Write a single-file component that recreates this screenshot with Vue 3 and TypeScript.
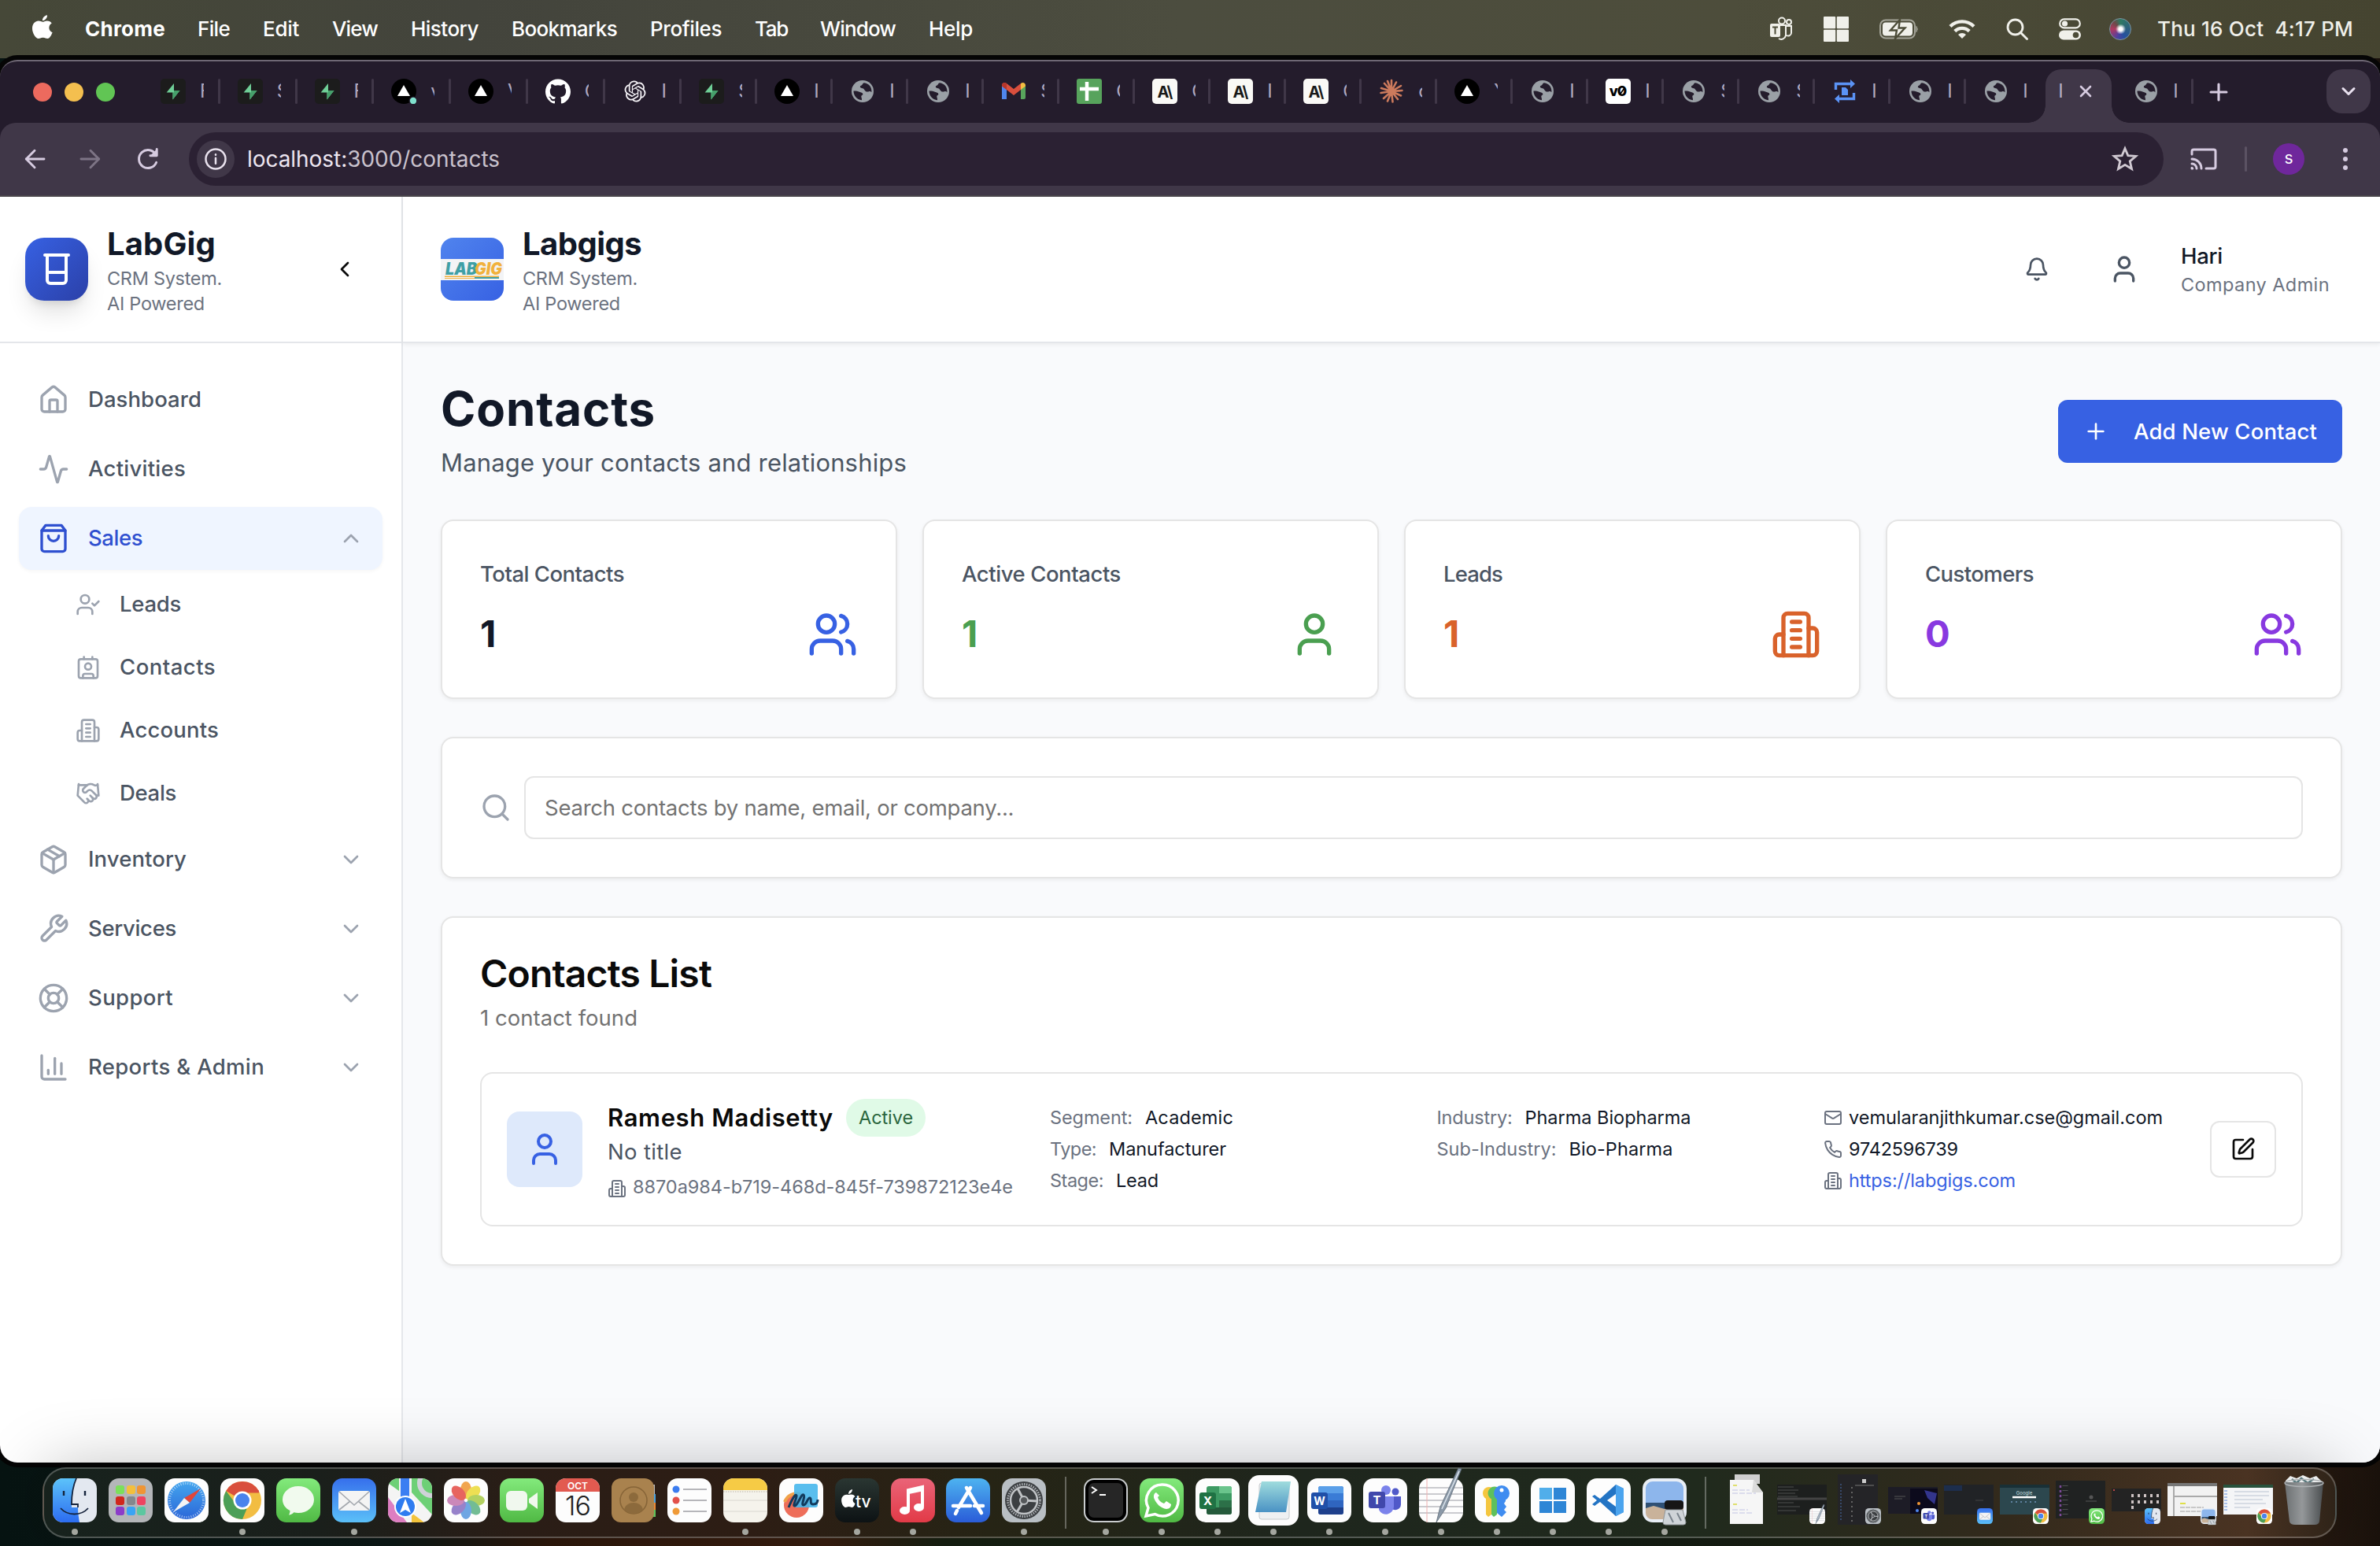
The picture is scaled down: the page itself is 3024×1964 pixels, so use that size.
<script setup lang="ts">
import { h, ref } from 'vue'

// Stroke icons on a 24-unit grid
const ICONS: Record<string, string> = {
  home: '<path d="M15 21v-8a1 1 0 0 0-1-1h-4a1 1 0 0 0-1 1v8"/><path d="M3 10a2 2 0 0 1 .709-1.528l7-5.999a2 2 0 0 1 2.582 0l7 5.999A2 2 0 0 1 21 10v9a2 2 0 0 1-2 2H5a2 2 0 0 1-2-2z"/>',
  activity: '<path d="M22 12h-2.48a2 2 0 0 0-1.93 1.46l-2.35 8.36a.25.25 0 0 1-.48 0L9.24 2.18a.25.25 0 0 0-.48 0l-2.35 8.36A2 2 0 0 1 4.49 12H2"/>',
  bag: '<path d="M6 2 3 6v14a2 2 0 0 0 2 2h14a2 2 0 0 0 2-2V6l-3-4Z"/><path d="M3 6h18"/><path d="M16 10a4 4 0 0 1-8 0"/>',
  userCheck: '<path d="m16 11 2 2 4-4"/><path d="M16 21v-2a4 4 0 0 0-4-4H6a4 4 0 0 0-4 4v2"/><circle cx="9" cy="7" r="4"/>',
  contact: '<path d="M16 2v2"/><path d="M7 22v-2a2 2 0 0 1 2-2h6a2 2 0 0 1 2 2v2"/><path d="M8 2v2"/><circle cx="12" cy="11" r="3"/><rect x="3" y="4" width="18" height="18" rx="2"/>',
  building: '<path d="M6 22V4a2 2 0 0 1 2-2h8a2 2 0 0 1 2 2v18Z"/><path d="M6 12H4a2 2 0 0 0-2 2v6a2 2 0 0 0 2 2h2"/><path d="M18 9h2a2 2 0 0 1 2 2v9a2 2 0 0 1-2 2h-2"/><path d="M10 6h4"/><path d="M10 10h4"/><path d="M10 14h4"/><path d="M10 18h4"/>',
  handshake: '<path d="m11 17 2 2a1 1 0 1 0 3-3"/><path d="m14 14 2.5 2.5a1 1 0 1 0 3-3l-3.88-3.88a3 3 0 0 0-4.24 0l-.88.88a1 1 0 1 1-3-3l2.81-2.81a5.79 5.79 0 0 1 7.06-.87l.47.28a2 2 0 0 0 1.42.25L21 4"/><path d="m21 3 1 11h-2"/><path d="M3 3 2 14l6.5 6.5a1 1 0 1 0 3-3"/><path d="M3 4h8"/>',
  box: '<path d="m7.5 4.27 9 5.15"/><path d="M21 8a2 2 0 0 0-1-1.73l-7-4a2 2 0 0 0-2 0l-7 4A2 2 0 0 0 3 8v8a2 2 0 0 0 1 1.73l7 4a2 2 0 0 0 2 0l7-4A2 2 0 0 0 21 16Z"/><path d="m3.3 7 8.7 5 8.7-5"/><path d="M12 22V12"/>',
  wrench: '<path d="M14.7 6.3a1 1 0 0 0 0 1.4l1.6 1.6a1 1 0 0 0 1.4 0l3.77-3.77a6 6 0 0 1-7.94 7.94l-6.91 6.91a2.12 2.12 0 0 1-3-3l6.91-6.91a6 6 0 0 1 7.94-7.94l-3.76 3.76z"/>',
  buoy: '<circle cx="12" cy="12" r="10"/><path d="m4.93 4.93 4.24 4.24"/><path d="m14.83 9.17 4.24-4.24"/><path d="m14.83 14.83 4.24 4.24"/><path d="m9.17 14.83-4.24 4.24"/><circle cx="12" cy="12" r="4"/>',
  chart: '<path d="M3 3v16a2 2 0 0 0 2 2h16"/><path d="M18 17V9"/><path d="M13 17V5"/><path d="M8 17v-3"/>',
  beaker: '<path d="M4.5 3h15"/><path d="M6 3v16a2 2 0 0 0 2 2h8a2 2 0 0 0 2-2V3"/><path d="M6 14h12"/>',
  bell: '<path d="M10.268 21a2 2 0 0 0 3.464 0"/><path d="M3.262 15.326A1 1 0 0 0 4 17h16a1 1 0 0 0 .74-1.673C19.41 13.956 18 12.499 18 8A6 6 0 0 0 6 8c0 4.499-1.411 5.956-2.738 7.326"/>',
  user: '<path d="M19 21v-2a4 4 0 0 0-4-4H9a4 4 0 0 0-4 4v2"/><circle cx="12" cy="7" r="4"/>',
  users: '<path d="M16 21v-2a4 4 0 0 0-4-4H6a4 4 0 0 0-4 4v2"/><circle cx="9" cy="7" r="4"/><path d="M22 21v-2a4 4 0 0 0-3-3.87"/><path d="M16 3.13a4 4 0 0 1 0 7.75"/>',
  mail: '<rect x="2" y="4" width="20" height="16" rx="2"/><path d="m22 7-8.97 5.7a1.94 1.94 0 0 1-2.06 0L2 7"/>',
  phone: '<path d="M22 16.92v3a2 2 0 0 1-2.18 2 19.79 19.79 0 0 1-8.63-3.07 19.5 19.5 0 0 1-6-6 19.79 19.79 0 0 1-3.07-8.67A2 2 0 0 1 4.11 2h3a2 2 0 0 1 2 1.72 12.84 12.84 0 0 0 .7 2.81 2 2 0 0 1-.45 2.11L8.09 9.91a16 16 0 0 0 6 6l1.27-1.27a2 2 0 0 1 2.11-.45 12.84 12.84 0 0 0 2.81.7A2 2 0 0 1 22 16.92z"/>',
  edit: '<path d="M12 3H5a2 2 0 0 0-2 2v14a2 2 0 0 0 2 2h14a2 2 0 0 0 2-2v-7"/><path d="M18.375 2.625a1 1 0 0 1 3 3l-9.013 9.014a2 2 0 0 1-.853.505l-2.873.84a.5.5 0 0 1-.62-.62l.84-2.873a2 2 0 0 1 .506-.852z"/>',
  plus: '<path d="M5 12h14"/><path d="M12 5v14"/>',
  search: '<circle cx="11" cy="11" r="8"/><path d="m21 21-4.3-4.3"/>',
  up: '<path d="m18 15-6-6-6 6"/>',
  down: '<path d="m6 9 6 6 6-6"/>',
  left: '<path d="m15 18-6-6 6-6"/>',
  close: '<path d="M18 6 6 18"/><path d="m6 6 12 12"/>',
  arrowLeft: '<path d="M21 12H4"/><path d="m12 4-8 8 8 8"/>',
  arrowRight: '<path d="M3 12h17"/><path d="m12 4 8 8-8 8"/>',
  reload: '<path d="M20 15.2A8.6 8.6 0 1 1 19.6 8"/><path d="M20.4 2.6v6.2h-6.2"/><path d="M16 8.4h4V4.6z" fill="currentColor"/>',
  info: '<circle cx="12" cy="12" r="10"/><path d="M12 11v5.5"/><path d="M12 7.4v.4"/>',
  star: '<path d="m12 2.6 2.7 6.3 6.9.6-5.2 4.5 1.6 6.8-6-3.6-6 3.6L7.6 14 2.4 9.5l6.9-.6z" stroke-linejoin="miter"/>',
  cast: '<path d="M2 8V5.500a1.500 1.500 0 0 1 1.500-1.500h17A1.500 1.500 0 0 1 22 5.500v13a1.500 1.500 0 0 1-1.500 1.500H14"/><path d="M2 12a8 8 0 0 1 8 8"/><path d="M2 16a4 4 0 0 1 4 4"/><path d="M2 19.500v.5h.5"/>',
}

const Icon = (props: { name: string; size: number; weight?: number }) =>
  h('svg', {
    width: props.size,
    height: props.size,
    viewBox: '0 0 24 24',
    fill: 'none',
    stroke: 'currentColor',
    'stroke-width': props.weight ?? 2,
    'stroke-linecap': 'round',
    'stroke-linejoin': 'round',
    innerHTML: ICONS[props.name],
  })
Icon.props = ['name', 'size', 'weight']

// Tab favicons, 32-unit grid
const FAVICONS: Record<string, string> = {
  supabase: '<rect width="32" height="32" rx="5" fill="#1c1c1c"/><path d="M17 6v9h7.500L15.500 26.500V17.500H7.600z" fill="#6fcf97"/><path d="M15.500 17.500h1.500V15h7.500L15.500 26.500z" fill="#46a06b"/>',
  vercel: '<circle cx="16" cy="16" r="16" fill="#000"/><path d="M16 8l8 14H8z" fill="#fff"/>',
  vercelDot: '<circle cx="16" cy="16" r="16" fill="#000"/><path d="M16 8l8 14H8z" fill="#fff"/><circle cx="28" cy="28" r="5.500" fill="#241c2c"/><circle cx="28" cy="28" r="4.200" fill="#7fe0cd"/>',
  github: '<path transform="scale(1.3333)" fill="#fff" d="M12 .297c-6.630 0-12 5.373-12 12 0 5.303 3.438 9.800 8.205 11.385.6.113.82-.258.82-.577 0-.285-.01-1.040-.015-2.040-3.338.724-4.042-1.610-4.042-1.610C4.422 18.070 3.633 17.700 3.633 17.700c-1.087-.744.084-.729.084-.729 1.205.084 1.838 1.236 1.838 1.236 1.070 1.835 2.809 1.305 3.495.998.108-.776.417-1.305.76-1.605-2.665-.3-5.466-1.332-5.466-5.930 0-1.310.465-2.380 1.235-3.220-.135-.303-.54-1.523.105-3.176 0 0 1.005-.322 3.300 1.230.96-.267 1.980-.399 3-.405 1.020.006 2.040.138 3 .405 2.280-1.552 3.285-1.230 3.285-1.230.645 1.653.24 2.873.12 3.176.765.84 1.230 1.910 1.230 3.220 0 4.610-2.805 5.625-5.475 5.920.42.36.81 1.096.81 2.220 0 1.606-.015 2.896-.015 3.286 0 .315.21.69.825.57C20.565 22.092 24 17.592 24 12.297c0-6.627-5.373-12-12-12"/>',
  openai: '<path transform="translate(2.500 2.500) scale(1.125)" fill="#f4f2f6" d="M22.2819 9.8211a5.9847 5.9847 0 0 0-.5157-4.9108 6.0462 6.0462 0 0 0-6.5098-2.9A6.0651 6.0651 0 0 0 4.9807 4.1818a5.9847 5.9847 0 0 0-3.9977 2.9 6.0462 6.0462 0 0 0 .7427 7.0966 5.98 5.98 0 0 0 .511 4.9107 6.051 6.051 0 0 0 6.5146 2.9001A5.9847 5.9847 0 0 0 13.2599 24a6.0557 6.0557 0 0 0 5.7718-4.2058 5.9894 5.9894 0 0 0 3.9977-2.9001 6.0557 6.0557 0 0 0-.7475-7.0729zm-9.022 12.6081a4.4755 4.4755 0 0 1-2.8764-1.0408l.1419-.0804 4.7783-2.7582a.7948.7948 0 0 0 .3927-.6813v-6.7369l2.02 1.1686a.071.071 0 0 1 .038.052v5.5826a4.504 4.504 0 0 1-4.4945 4.4944zm-9.6607-4.1254a4.4708 4.4708 0 0 1-.5346-3.0137l.142.0852 4.783 2.7582a.7712.7712 0 0 0 .7806 0l5.8428-3.3685v2.3324a.0804.0804 0 0 1-.0332.0615L9.74 19.9502a4.4992 4.4992 0 0 1-6.1408-1.6464zM2.3408 7.8956a4.485 4.485 0 0 1 2.3655-1.9728V11.6a.7664.7664 0 0 0 .3879.6765l5.8144 3.3543-2.0201 1.1685a.0757.0757 0 0 1-.071 0l-4.8303-2.7865A4.504 4.504 0 0 1 2.3408 7.872zm16.5963 3.8558L13.1038 8.364 15.1192 7.2a.0757.0757 0 0 1 .071 0l4.8303 2.7913a4.4944 4.4944 0 0 1-.6765 8.1042v-5.6772a.79.79 0 0 0-.407-.667zm2.0107-3.0231l-.142-.0852-4.7735-2.7818a.7759.7759 0 0 0-.7854 0L9.409 9.2297V6.8974a.0662.0662 0 0 1 .0284-.0615l4.8303-2.7866a4.4992 4.4992 0 0 1 6.6802 4.66zM8.3065 12.863l-2.02-1.1638a.0804.0804 0 0 1-.038-.0567V6.0742a4.4992 4.4992 0 0 1 7.3757-3.4537l-.142.0805L8.704 5.459a.7948.7948 0 0 0-.3927.6813zm1.0976-2.3654l2.602-1.4998 2.6069 1.4998v2.9994l-2.5974 1.4997-2.6067-1.4997Z"/>',
  globe: '<circle cx="16" cy="16" r="14" fill="#9aa0a6"/><path d="M4.500 15.500c4 0 5.500.3 7.500 1.200 2 1 4 .6 4.300 2.600.3 1.800-2 1.700-2 3.300 0 1.500.9 2.200.7 4.600C8.500 26.800 4.400 21 4.500 15.500z" fill="#241c2c"/><path d="M18 5.200c-2.500.8-2 2.800-3.500 3.200-1.800.6-2.300 2.200-.8 3.200 1.700 1 3.500.5 4.500 2.300 1.200 2 3 3.200 5.200 2.500 2-.6 3-.2 4 .8C28 11 24.500 6.200 18 5.200z" fill="#241c2c"/>',
  gmail: '<path d="M1 8v18h6V13z" fill="#4f86ec"/><path d="M25 13v13h4a2 2 0 0 0 2-2V8z" fill="#58a55c"/><path d="M1 8.500C1 5 4.500 4 7 6l9 7 9-7v8l-9 7-9-7-6-4.500z" fill="#d94f3d"/><path d="M1 8.500C1 5 4.500 4 7 6v8l-6-4.500z" fill="#b5362b"/><path d="M25 6c2.500-2 6-1 6 2.500v1L25 14z" fill="#f2bd42"/>',
  sheets: '<rect width="32" height="32" rx="3" fill="#57a35c"/><path d="M13 4v24M4 13h24" stroke="#fff" stroke-width="4.500"/>',
  anthropic: '<rect width="32" height="32" rx="5" fill="#faf9f6"/><text x="15.800" y="23.500" font-family="Inter, sans-serif" font-weight="700" font-size="20" letter-spacing="-1.200" text-anchor="middle" fill="#191919">A\\</text>',
  claude: '<g stroke="#cc7a5c" stroke-width="2.600" stroke-linecap="round"><path d="M16 16V2M16 16l6-11.500M16 16L28 9M16 16l13.500-1M16 16l12 5.500M16 16l8 10M16 16l1.500 13.500M16 16l-5 12.500M16 16L6 25M16 16l-13.500 2M16 16L3 12M16 16L7 6M16 16L11 3"/></g>',
  v0: '<rect width="32" height="32" rx="5" fill="#fff"/><text x="15.500" y="22" font-family="Inter, sans-serif" font-weight="800" font-size="18" letter-spacing="-1" text-anchor="middle" fill="#000">v0</text><path d="M18.500 19.500l5.500-7.500" stroke="#000" stroke-width="1.800"/>',
  loop: '<g fill="none" stroke="#5b93f5" stroke-width="3.400"><path d="M4.500 14V6.500H25"/><path d="M27.500 18v7.500H7"/></g><path d="M23 1l6 5.500-6 5.500zM9 20l-6 5.500L9 31z" fill="#5b93f5"/><path d="M12 11h5l3 3v7h-8z" fill="#5b93f5"/>',
}

const tabs = [
  ['supabase', 'F'], ['supabase', 'S'], ['supabase', 'F'], ['vercelDot', 'v'], ['vercel', 'V'], ['github', 'C'],
  ['openai', 'I'], ['supabase', 'S'], ['vercel', 'I'], ['globe', 'I'], ['globe', 'I'], ['gmail', 'S'],
  ['sheets', 'C'], ['anthropic', 'C'], ['anthropic', 'I'], ['anthropic', 'C'], ['claude', 'c'], ['vercel', 'Y'],
  ['globe', 'I'], ['v0', 'I'], ['globe', 'S'], ['globe', 'S'], ['loop', 'I'], ['globe', 'I'], ['globe', 'I'],
].map(([icon, letter], i) => ({ icon, letter, wide: i < 7 }))

// Menu titles with the horizontal pitch and drawn width of each
const menus = [
  { t: 'Chrome', pitch: 143, w: 102 },
  { t: 'File', pitch: 83, w: 41 },
  { t: 'Edit', pitch: 88, w: 46 },
  { t: 'View', pitch: 100, w: 58 },
  { t: 'History', pitch: 128, w: 86 },
  { t: 'Bookmarks', pitch: 176, w: 134 },
  { t: 'Profiles', pitch: 133, w: 91 },
  { t: 'Tab', pitch: 83, w: 42 },
  { t: 'Window', pitch: 138, w: 96 },
  { t: 'Help', pitch: 60, w: 56 },
]

const nav = [
  { t: 'Dashboard', icon: 'home', w: 144 },
  { t: 'Activities', icon: 'activity', w: 124 },
  {
    t: 'Sales', icon: 'bag', w: 69, open: true,
    children: [
      { t: 'Leads', icon: 'userCheck', w: 78 },
      { t: 'Contacts', icon: 'contact', w: 122 },
      { t: 'Accounts', icon: 'building', w: 126 },
      { t: 'Deals', icon: 'handshake', w: 72 },
    ],
  },
  { t: 'Inventory', icon: 'box', w: 125, group: true },
  { t: 'Services', icon: 'wrench', w: 112, group: true },
  { t: 'Support', icon: 'buoy', w: 108, group: true },
  { t: 'Reports & Admin', icon: 'chart', w: 224, group: true },
]

const stats = [
  { label: 'Total Contacts', w: 183, value: '1', icon: 'users', value_color: '#111827', icon_color: '#3761e3' },
  { label: 'Active Contacts', w: 202, value: '1', icon: 'user', value_color: '#4a9f50', icon_color: '#4a9f50' },
  { label: 'Leads', w: 75, value: '1', icon: 'building', value_color: '#d9622b', icon_color: '#d9622b' },
  { label: 'Customers', w: 138, value: '0', icon: 'users', value_color: '#8839e0', icon_color: '#8839e0' },
]

const details = [
  [
    { k: 'Segment:', kw: 105, v: 'Academic', vw: 112 },
    { k: 'Type:', kw: 59, v: 'Manufacturer', vw: 149 },
    { k: 'Stage:', kw: 68, v: 'Lead', vw: 54 },
  ],
  [
    { k: 'Industry:', kw: 96, v: 'Pharma Biopharma', vw: 211 },
    { k: 'Sub-Industry:', kw: 152, v: 'Bio-Pharma', vw: 132 },
  ],
]

const query = ref('')

// Tracks a label out (or in) until it fills the given width
const vFit = {
  mounted(el: HTMLElement, { value }: { value: number }) {
    const n = (el.textContent ?? '').trim().length
    if (n > 1) el.style.letterSpacing = `${(value - el.getBoundingClientRect().width) / n}px`
  },
}

const WHITE = '<rect width="56" height="56" rx="13" fill="#fdfdfd"/>'
// Application tiles, 56-unit grid
const APPS: Record<string, string> = {
  finder: '<rect width="56" height="56" rx="13" fill="#e3e8f0"/><path d="M30 0H13A13 13 0 0 0 0 13v30a13 13 0 0 0 13 13h21c-1-6-2-12-2-19h-8c0-14 2-27 6-37z" fill="url(#gFinder)"/><path d="M14 16v6M41 16v6" stroke="#16243c" stroke-width="2.400"/><path d="M10 38c9 10 26 10 35 0M32 37v-4h-8c0-12 2-24 6-33" fill="none" stroke="#16243c" stroke-width="1.800"/>',
  launchpad: '<rect width="56" height="56" rx="13" fill="#b4b6b9"/><rect x="9" y="9" width="11" height="11" rx="3" fill="#7be05a"/><rect x="23" y="9" width="11" height="11" rx="3" fill="#f3bf3c"/><rect x="36" y="9" width="11" height="11" rx="3" fill="#ef9535"/><rect x="9" y="23" width="11" height="11" rx="3" fill="#d0271d"/><rect x="23" y="23" width="11" height="11" rx="3" fill="#84888d"/><rect x="36" y="23" width="11" height="11" rx="3" fill="#ee4461"/><rect x="9" y="36" width="11" height="11" rx="3" fill="#8c3cc9"/><rect x="23" y="36" width="11" height="11" rx="3" fill="#3aa4f4"/><rect x="36" y="36" width="11" height="11" rx="3" fill="#5cc7a0"/>',
  safari: WHITE + '<circle cx="28" cy="28" r="24" fill="url(#gBlue)"/><circle cx="28" cy="28" r="21.500" fill="none" stroke="#fff" stroke-opacity=".6" stroke-width="3" stroke-dasharray="1 2"/><path d="M46 13L32 31l-7-6z" fill="#e2463a"/><path d="M11 43l14-18 7 6z" fill="#f4f4f4"/>',
  chrome: WHITE + '<circle cx="28" cy="28" r="24" fill="#f2bd42"/><path d="M28 28L7.200 16A24 24 0 0 1 48.800 16H28z" fill="#d94f3d"/><path d="M28 52A24 24 0 0 1 7.200 16L20 33l13.500 6z" fill="#4c9f57"/><path d="M28 17h21" stroke="#d94f3d" stroke-width="3"/><circle cx="28" cy="28" r="11.500" fill="#fff"/><circle cx="28" cy="28" r="9" fill="#4a83ec"/>',
  messages: '<rect width="56" height="56" rx="13" fill="url(#gGreen)"/><path d="M28 10c11.500 0 20 7.500 20 17s-8.500 17-20 17c-2 0-4-.2-5.600-.7C21 45 18.500 46.500 16 46.500c1-1.500 1.600-3.500 1.400-5.400C11.500 38 8 33 8 27c0-9.500 8.500-17 20-17z" fill="#f1faee"/>',
  mail: '<rect width="56" height="56" rx="13" fill="url(#gMail)"/><rect x="8" y="16" width="40" height="25" rx="3" fill="#f4f4f4"/><path d="M9 17l19 17 19-17M9 40l14-11M47 40L33 29" fill="none" stroke="#a4a8ae" stroke-width="1.600"/>',
  maps: '<g clip-path="url(#tile)"><rect width="56" height="56" fill="#f4f4f4"/><path d="M0 24l24 32H0z" fill="#dd7ec1"/><path d="M30 0h26v46L30 18z" fill="#6dd076"/><path d="M0 0h14v16L0 6z" fill="#6dd076"/><circle cx="56" cy="6" r="16" fill="none" stroke="#cfd2d8" stroke-width="6"/><path d="M16 0h11v24H16z" fill="#3b7ef2"/><path d="M30 44l16 12H30z" fill="#f3c33c"/></g><circle cx="22" cy="36" r="14" fill="#fff"/><circle cx="22" cy="36" r="12" fill="#2f7cf0"/><path d="M22 26l7 18-7-4-7 4z" fill="#fff"/>',
  photos: WHITE + '<g opacity=".88"><ellipse cx="28" cy="15" rx="7" ry="11" fill="#f09a38"/><ellipse cx="28" cy="15" rx="7" ry="11" fill="#ecdc3c" transform="rotate(45 28 28)"/><ellipse cx="28" cy="15" rx="7" ry="11" fill="#a9cc4c" transform="rotate(90 28 28)"/><ellipse cx="28" cy="15" rx="7" ry="11" fill="#5fb486" transform="rotate(135 28 28)"/><ellipse cx="28" cy="15" rx="7" ry="11" fill="#5c9be0" transform="rotate(180 28 28)"/><ellipse cx="28" cy="15" rx="7" ry="11" fill="#8a72c4" transform="rotate(225 28 28)"/><ellipse cx="28" cy="15" rx="7" ry="11" fill="#c578b0" transform="rotate(270 28 28)"/><ellipse cx="28" cy="15" rx="7" ry="11" fill="#e4504a" transform="rotate(315 28 28)"/></g>',
  facetime: '<rect width="56" height="56" rx="13" fill="url(#gGreen)"/><rect x="8" y="16" width="27" height="25" rx="6" fill="#f0f8ee"/><path d="M37 26l11-8v21l-11-8z" fill="#f0f8ee"/>',
  calendar: WHITE + '<path d="M0 17V13A13 13 0 0 1 13 0h30a13 13 0 0 1 13 13v4z" fill="#e25a50"/><text x="28" y="13.500" font-family="Inter, sans-serif" font-size="12" font-weight="600" text-anchor="middle" fill="#fff">OCT</text><text x="28" y="47" font-family="Inter, sans-serif" font-size="34" font-weight="300" letter-spacing="-1" text-anchor="middle" fill="#222">16</text>',
  contacts: '<path d="M52 8h3v12h-3z" fill="#bbb"/><path d="M52 20h4v12h-4z" fill="#4aa3e0"/><path d="M52 31h4v10h-4z" fill="#ef8a35"/><path d="M52 40h4v9h-4z" fill="#5fc35a"/><rect width="54" height="56" rx="12" fill="#a9824e"/><circle cx="28" cy="28" r="17" fill="none" stroke="#866437" stroke-width="1.500"/><circle cx="28" cy="24" r="6" fill="#8c6a3c"/><path d="M16 40c2-12 22-12 24 0-6 6-18 6-24 0z" fill="#8c6a3c"/>',
  reminders: WHITE + '<circle cx="11" cy="14" r="4.500" fill="#3b7cf0"/><circle cx="11" cy="28" r="4.500" fill="#e2504a"/><circle cx="11" cy="42" r="4.500" fill="#ef9a38"/><path d="M20 14h30M20 28h30M20 42h30" stroke="#b6b6ba" stroke-width="1.800"/>',
  notes: '<rect width="56" height="56" rx="13" fill="#f5f3ec"/><path d="M0 15v-2A13 13 0 0 1 13 0h30a13 13 0 0 1 13 13v2z" fill="#f6cb45"/><path d="M0 17h56" stroke="#cfcabc" stroke-width="1.500" stroke-dasharray="1.500 1.500"/><path d="M0 28h56M0 42h56" stroke="#d9d7d0" stroke-width="1.200"/>',
  freeform: WHITE + '<circle cx="22" cy="34" r="16" fill="#ee6e5a"/><path d="M7 30a16 16 0 0 1 20-10" stroke="#f0a24a" stroke-width="4" fill="none"/><rect x="19" y="7" width="30" height="30" rx="3" fill="#47b7ec" opacity=".9"/><path d="M12 37c5-12 9-18 10-15s-6 14-2 13 8-16 11-14-4 13 0 13 5-10 8-9-1 8 4 8 6-3 6-6" fill="none" stroke="#123a5c" stroke-width="3"/>',
  tv: '<rect width="56" height="56" rx="13" fill="url(#gTv)"/><path d="M17 21c-3-1-7 0-8.500 4-1.500 5 1.500 12 5 12 1.500 0 2-1 4-1s2.500 1 4 1c2 0 3.500-3 4-5-4-2-3.500-7 0-9-2-3-5-3-8.500-2zM17 20c0-3 2-5.500 5-6 0 3-2 5.500-5 6z" fill="#fff"/><text x="26" y="36.500" font-family="Inter, sans-serif" font-size="21" font-weight="500" fill="#fff">tv</text>',
  music: '<rect width="56" height="56" rx="13" fill="url(#gRed)"/><path d="M22 40V15l18-4v25" fill="none" stroke="#fff" stroke-width="4"/><path d="M20.500 14.500L42 10v6l-21.500 4.500z" fill="#fff"/><ellipse cx="17.500" cy="41" rx="6.500" ry="5" fill="#fff"/><ellipse cx="35.500" cy="37" rx="6.500" ry="5" fill="#fff"/>',
  appstore: '<rect width="56" height="56" rx="13" fill="url(#gStore)"/><path d="M31 12L16 37M26 12l19 32M9 35h22M36 35h11M14 41l-2 4" stroke="#fff" stroke-width="4.500" stroke-linecap="round"/>',
  settings: '<rect width="56" height="56" rx="13" fill="#b9bfc4"/><circle cx="28" cy="28" r="24" fill="#3c3f42"/><circle cx="28" cy="28" r="20.500" fill="none" stroke="#a9adb1" stroke-width="3" stroke-dasharray="1.500 1.500"/><circle cx="28" cy="28" r="17" fill="none" stroke="#c0c3c6" stroke-width="2.500"/><path d="M28 28L20 13M28 28l17 1M28 28l-9 15" stroke="#c0c3c6" stroke-width="3"/><circle cx="28" cy="28" r="5" fill="#55585b" stroke="#c0c3c6" stroke-width="2"/>',
  terminal: '<rect width="56" height="56" rx="13" fill="#c9ccce"/><rect x="2" y="2" width="52" height="52" rx="11" fill="#000"/><rect x="6" y="6" width="44" height="44" rx="7" fill="#262626"/><path d="M10 11l6 4-6 4M20 21h8" fill="none" stroke="#fff" stroke-width="2"/>',
  whatsapp: '<rect width="56" height="56" rx="13" fill="url(#gGreen)"/><path d="M29 8a20 20 0 1 1-9.500 37.500L8 48l3-10.500A20 20 0 0 1 29 8z" fill="none" stroke="#fff" stroke-width="3.500"/><path d="M21 18c-3 1-4 5-2 9 3 6 8 11 15 12 4 0 6-3 6-6l-6-4-3 3c-4-1.500-7-4-8-8l2-2z" fill="#fff"/>',
  excel: WHITE + '<rect x="14" y="10" width="32" height="36" rx="3" fill="#3d9a63"/><path d="M30 10h13a3 3 0 0 1 3 3v6H30z" fill="#6ac48c"/><path d="M30 28h16v9H30z" fill="#2c7048"/><path d="M14 37h32v6a3 3 0 0 1-3 3H17a3 3 0 0 1-3-3z" fill="#24593a"/><rect x="5" y="18" width="21" height="21" rx="3" fill="#1f7244"/><text x="15.500" y="34" font-family="Inter, sans-serif" font-size="15" font-weight="700" text-anchor="middle" fill="#fff">X</text>',
  word: WHITE + '<rect x="14" y="10" width="32" height="36" rx="3" fill="#2f65c0"/><path d="M17 10h26a3 3 0 0 1 3 3v6H14v-6a3 3 0 0 1 3-3z" fill="#5a9fe8"/><path d="M14 37h32v6a3 3 0 0 1-3 3H17a3 3 0 0 1-3-3z" fill="#1d3f8b"/><path d="M14 19h32v9H14z" fill="#3a7cd6"/><rect x="5" y="18" width="21" height="21" rx="3" fill="#1f4fa8"/><text x="15.500" y="34" font-family="Inter, sans-serif" font-size="14" font-weight="700" text-anchor="middle" fill="#fff">W</text>',
  teams: WHITE + '<circle cx="41" cy="17" r="4.500" fill="#5059c9"/><path d="M34 23h14v10a7 7 0 0 1-12 5z" fill="#5059c9"/><circle cx="29" cy="15" r="6" fill="#7b83eb"/><path d="M20 23h19v13a10 10 0 0 1-19 4z" fill="#7b83eb"/><rect x="7" y="17" width="21" height="21" rx="3" fill="#4048ab"/><text x="17.500" y="33" font-family="Inter, sans-serif" font-size="15" font-weight="700" text-anchor="middle" fill="#fff">T</text>',
  preview: '<rect x="-4" y="-4" width="64" height="64" rx="14" fill="#fdfdfd"/><rect x="10" y="6" width="38" height="46" rx="3" fill="#eef0f2" stroke="#c6cacd"/><path d="M13 4h37l-6 39H5z" fill="url(#gGlass)"/>',
  textedit: WHITE + '<path d="M0 12h56M0 20h56M0 28h56M0 36h56M0 44h56" stroke="#b9bbc0" stroke-width="1.300"/><path d="M10 0v56" stroke="#efb0b0"/><path d="M54-12L50-13 27 36 22 56 34 38z" fill="#8b99a8" stroke="#5c6875" stroke-width=".8"/><path d="M51-9L29 39" stroke="#dbe4ec" stroke-width="1.500"/>',
  passwords: WHITE + '<circle cx="18" cy="19" r="8" fill="#f4c63f"/><path d="M14 24h7v22l-4 3-3-3z" fill="#f4c63f"/><circle cx="25" cy="19" r="8.500" fill="#5ec05c"/><path d="M21 24h7v22l-4 3-3-3z" fill="#5ec05c"/><circle cx="34" cy="19" r="10" fill="#3f8cf0"/><path d="M28 24h11v5l-2 3 3 4-3 4 3 3-6 6-6-5z" fill="#3f8cf0"/><circle cx="34" cy="15" r="2.500" fill="#fff"/>',
  windows: WHITE + '<path d="M11 12h16v15H11zM29 12h16v15H29zM11 29h16v15H11zM29 29h16v15H29z" fill="#2e86d6"/><path d="M11 12h16v15H11z" fill="#51aeea"/>',
  vscode: WHITE + '<path d="M37 8l10 5v30l-10 5L17 30l-7 5-3-2 6-5-6-5 3-2 7 5z" fill="#2374c4"/><path d="M37 8l10 5v30l-10 5z" fill="#4ba4ee"/><path d="M37 20v16l-11-8z" fill="#fdfdfd"/>',
  screenshot: '<rect width="56" height="56" rx="13" fill="#e8eef6"/><path d="M4 12a9 9 0 0 1 9-8h30a9 9 0 0 1 9 9v18H4z" fill="#8db6ec"/><path d="M4 31h48v12H4z" fill="#2f5074"/><path d="M4 38l10-3 14 4 24-3v8a8 8 0 0 1-8 8H12a8 8 0 0 1-8-8z" fill="#c9b29a"/><rect x="28" y="28" width="24" height="12" rx="4" fill="#161616"/><path d="M29 40h22l4 16a3 3 0 0 1-3 3H29a3 3 0 0 1-3-3z" fill="#cfd4d8" stroke="#8f9599"/><path d="M33 44l6 12M44 44l5 10" stroke="#7b858d" stroke-width="2"/>',
}

const leftApps = ['finder', 'launchpad', 'safari', 'chrome', 'messages', 'mail', 'maps', 'photos', 'facetime', 'calendar', 'contacts', 'reminders', 'notes', 'freeform', 'tv', 'music', 'appstore', 'settings']
const rightApps = ['terminal', 'whatsapp', 'excel', 'preview', 'word', 'teams', 'textedit', 'passwords', 'windows', 'vscode', 'screenshot']
const running = new Set(['finder', 'chrome', 'mail', 'notes', 'tv', 'music', 'settings', ...rightApps])

// Minimised windows, 64-unit grid
const thumbs = [
  { art: '<path d="M17 0h32v12H17z" fill="#cfcfcf"/><path d="M11 7h30l12 16v40H11z" fill="#f6f6f6"/><path d="M41 7l12 16H39z" fill="#dcdcdc"/><path d="M15 14h5M15 38h5" stroke="#d8d840" stroke-width="1.500"/><path d="M14 20h22M14 24h30M14 45h20M14 49h26" stroke="#d3d5ea" stroke-width="1.600" stroke-dasharray="7 2"/>' },
  { art: '<rect y="13" width="63" height="38" fill="#1d1f1e"/><path d="M1 16h20M1 20h26M1 24h22M1 28h25M1 36h20M1 41h28M1 46h23" stroke="#3d3f3e" stroke-width="1.300"/><path d="M0 31h63" stroke="#444" stroke-width="3"/>', badge: 'textedit' },
  { art: '<rect x="6" width="51" height="64" fill="#242427"/><path d="M10 12v48" stroke="#37496a" stroke-width="2" stroke-dasharray="2 2"/><path d="M24 16v44" stroke="#777" stroke-width="1.500" stroke-dasharray="2 4"/><rect x="37" y="6" width="5" height="5" fill="#ccc"/><path d="M28 14h24" stroke="#777"/>', badge: 'settings' },
  { art: '<rect y="16" width="63" height="34" fill="#1d1c26"/><path d="M28 18h35v32H28z" fill="#0c0a1c"/><path d="M46 20l16 4-3 14-9-8z" fill="#33358c"/><path d="M8 28h14M8 31h10" stroke="#555"/><circle cx="39" cy="37" r="2" fill="#ef9535"/><circle cx="37" cy="46" r="2" fill="#4f86ec"/>', badge: 'teams' },
  { art: '<rect y="13" width="63" height="38" fill="#212326"/><path d="M0 14h23v7H0z" fill="#1d2e4c"/><path d="M40 33h10" stroke="#444"/>', badge: 'mail' },
  { art: '<rect y="13" width="63" height="38" fill="#2c474e"/><path d="M0 13h63v4H0z" fill="#193036"/><path d="M16 29h30" stroke="#fff" stroke-width="2.500"/><path d="M14 35h36" stroke="#6d94b8" stroke-width="1.600" stroke-dasharray="2 4"/><text x="31" y="26" font-family="Inter, sans-serif" font-size="6" text-anchor="middle" fill="#cfe0e4">Google</text>', badge: 'chrome' },
  { art: '<rect y="8" width="63" height="48" fill="#202222"/><path d="M6 14v40" stroke="#7b4a98" stroke-width="2.500" stroke-dasharray="3 3"/><path d="M12 14v40" stroke="#4d5050" stroke-width="7" stroke-dasharray="1 5"/><path d="M38 34h14" stroke="#555"/><circle cx="45" cy="29" r="2.500" fill="#555"/>', badge: 'whatsapp' },
  { art: '<rect y="18" width="63" height="29" fill="#232323"/><path d="M25 27h36M25 35h36M25 42h4" stroke="#cdc3c3" stroke-width="4" stroke-dasharray="3 5"/><circle cx="3" cy="20" r="1" fill="#e55"/>', badge: 'finder' },
  { art: '<rect y="11" width="63" height="42" fill="#f2f2f2"/><path d="M0 11h63v4H0z" fill="#777"/><path d="M8 15v38M8 28h55" stroke="#aaa" stroke-width="2"/><path d="M16 37h7" stroke="#dfdf49" stroke-width="2"/><path d="M16 42h30M16 47h30" stroke="#bbb" stroke-width="1.600" stroke-dasharray="6 1"/>', badge: 'screenshot' },
  { art: '<rect y="13" width="63" height="38" fill="#f4f5f7"/><path d="M0 13h63v4H0z" fill="#28523c"/><path d="M3 20v28" stroke="#aac1ea" stroke-width="4" stroke-dasharray="2 2"/><path d="M14 22h44M14 27h44M14 32h36M14 37h40M14 42h20" stroke="#cdd3de" stroke-width="1.500"/>', badge: 'chrome' },
  { art: '<path d="M8 8l6-6 8 3 8-4 9 4 8-3 8 8-2 6H10z" fill="#eceeee"/><path d="M16 6l6 5 6-6 8 6 8-5" stroke="#57777c" stroke-width="2.500" fill="none"/><path d="M7 10h49l-5 50q-1 4-6 4H20q-6 0-7-4z" fill="url(#gTrash)"/><ellipse cx="31.500" cy="11" rx="24.500" ry="4.500" fill="none" stroke="#aeb2b4" stroke-width="1.500"/>' },
]
</script>

<template>
  <div class="desktop">
    <svg class="defs" width="0" height="0">
      <defs>
        <linearGradient id="gFinder" x2="0" y2="1"><stop stop-color="#5cc3fa" /><stop offset="1" stop-color="#2c6cf0" /></linearGradient>
        <linearGradient id="gBlue" x2="0" y2="1"><stop stop-color="#43a5ee" /><stop offset="1" stop-color="#2c67d8" /></linearGradient>
        <linearGradient id="gGreen" x2="0" y2="1"><stop stop-color="#83ea7c" /><stop offset="1" stop-color="#50b944" /></linearGradient>
        <linearGradient id="gMail" x2="0" y2="1"><stop stop-color="#366fec" /><stop offset="1" stop-color="#5bc0f8" /></linearGradient>
        <linearGradient id="gTv" x2="0" y2="1"><stop stop-color="#2a3632" /><stop offset="1" stop-color="#0d1214" /></linearGradient>
        <linearGradient id="gRed" x2="0" y2="1"><stop stop-color="#ea6478" /><stop offset="1" stop-color="#e23a47" /></linearGradient>
        <linearGradient id="gStore" x2="0" y2="1"><stop stop-color="#4db3f0" /><stop offset="1" stop-color="#2a5cd8" /></linearGradient>
        <linearGradient id="gGlass" x2="0" y2="1"><stop stop-color="#9fdcdd" /><stop offset="1" stop-color="#4a92c4" /></linearGradient>
        <linearGradient id="gTrash" x2="1" y2="0"><stop stop-color="#6c7072" /><stop offset=".45" stop-color="#95989a" /><stop offset="1" stop-color="#4a4e50" /></linearGradient>
        <clipPath id="tile"><rect width="56" height="56" rx="13" /></clipPath>
      </defs>
    </svg>

    <header class="menubar">
      <svg class="apple" width="28" height="32" viewBox="0 0 28 32">
        <path d="M14.200 8.800c1.300 0 3.200-1.600 5.700-1.400 2.600.1 4.600 1.200 5.800 3-4.900 3-4.200 9.700.9 11.800-1 2.700-3.300 7.700-6.200 7.800-2.200 0-2.900-1.300-5.800-1.300s-3.700 1.300-5.700 1.300C5.200 30 1 22.800 1 17.200c0-6.200 4-9.600 7.900-9.600 2.300 0 4 1.200 5.300 1.200zM13.900 7.200C13.700 3.800 16.700.5 20 .2c.4 3.600-2.900 7-6.100 7z" fill="#fff" />
      </svg>
      <nav class="menus">
        <span v-for="(m, i) in menus" :key="m.t" class="menu" :class="{ app: i === 0 }" :style="{ width: m.pitch + 'px' }"><span v-fit="m.w" class="fit">{{ m.t }}</span></span>
      </nav>
      <div class="status">
        <svg width="30" height="32" viewBox="0 0 30 32" fill="none" stroke="#f0f0ea" stroke-width="2">
          <circle cx="16" cy="5.500" r="4" /><circle cx="25" cy="7" r="3" />
          <path d="M12 11h9v13a6 6 0 0 1-9 4M22 12h6v9a4 4 0 0 1-6 3" />
          <rect x="1" y="9" width="13" height="17" rx="2" fill="#f0f0ea" stroke="none" /><path d="M4 13.500h7M7.500 13.500v9" stroke="#4c4c38" />
        </svg>
        <svg width="32" height="32" viewBox="0 0 32 32" fill="#f0f0ea">
          <rect width="15.200" height="15.200" rx="1" /><rect x="16.800" width="15.200" height="15.200" rx="1" /><rect y="16.800" width="15.200" height="15.200" rx="1" /><rect x="16.800" y="16.800" width="15.200" height="15.200" rx="1" />
        </svg>
        <svg width="50" height="26" viewBox="0 0 50 26">
          <rect x="1" y="1.500" width="44" height="23" rx="7" fill="none" stroke="#a4a498" stroke-width="2" />
          <path d="M47 9.500q2.500 3.500 0 7z" fill="#a4a498" stroke="#a4a498" />
          <rect x="4" y="4.500" width="38" height="17" rx="4" fill="#f0f0ea" />
          <path d="M26 1L14 14.500h8L20 25l12.500-13.500h-8z" fill="#f0f0ea" stroke="#4c4c38" stroke-width="2.400" />
        </svg>
        <svg width="34" height="26" viewBox="0 0 34 26" fill="none" stroke="#f0f0ea" stroke-width="4.400">
          <path d="M2 9.500a21.500 21.500 0 0 1 30 0" /><path d="M7.800 15.600a13.200 13.200 0 0 1 18.400 0" /><path d="M17 25l-5-5a7 7 0 0 1 10 0z" fill="#f0f0ea" stroke="none" />
        </svg>
        <svg width="28" height="28" viewBox="0 0 28 28" fill="none" stroke="#f0f0ea" stroke-width="2.800">
          <circle cx="11.500" cy="11.500" r="9.500" /><path d="M18.500 18.500l8 8" stroke-linecap="round" />
        </svg>
        <svg width="28" height="28" viewBox="0 0 28 28">
          <rect x="1.200" y="1.400" width="25.600" height="11" rx="5.500" fill="none" stroke="#f0f0ea" stroke-width="2.200" /><circle cx="7.500" cy="7" r="3.600" fill="#f0f0ea" />
          <rect y="15.500" width="28" height="12" rx="6" fill="#f0f0ea" /><circle cx="21.500" cy="21.500" r="3.800" fill="#4c4c38" />
        </svg>
        <span class="siri"></span>
        <span class="clock"><span v-fit="249" class="fit">Thu 16 Oct&nbsp; 4:17 PM</span></span>
      </div>
    </header>

    <div class="window">
      <div class="tabstrip">
        <div class="lights"><i class="red"></i><i class="amber"></i><i class="green"></i></div>
        <div class="tabs">
          <div v-for="(t, i) in tabs" :key="i" class="tab" :class="{ wide: t.wide, last: i === tabs.length - 1 }">
            <svg width="32" height="32" viewBox="0 0 32 32" v-html="FAVICONS[t.icon]"></svg>
            <span class="letter">{{ t.letter }}</span>
          </div>
          <div class="tab active"><span class="letter">I</span><Icon name="close" :size="24" :weight="2.6" /></div>
          <div class="tab after">
            <svg width="32" height="32" viewBox="0 0 32 32" v-html="FAVICONS.globe"></svg>
            <span class="letter">I</span>
          </div>
        </div>
        <Icon class="newtab" name="plus" :size="34" :weight="2.2" />
        <button class="tabsearch"><Icon name="down" :size="28" :weight="2.6" /></button>
      </div>

      <div class="toolbar">
        <Icon class="back" name="arrowLeft" :size="32" :weight="2.2" />
        <Icon class="forward" name="arrowRight" :size="32" :weight="2.2" />
        <Icon class="reload" name="reload" :size="32" :weight="2.2" />
        <div class="omnibox">
          <span class="siteinfo"><Icon name="info" :size="30" :weight="2" /></span>
          <span v-fit="321" class="fit url"><b>localhost:</b>3000/contacts</span>
          <Icon class="bookmark" name="star" :size="34" :weight="2" />
        </div>
        <Icon class="cast" name="cast" :size="36" :weight="2" />
        <i class="divider"></i>
        <span class="profile">s</span>
        <span class="dots"><i></i><i></i><i></i></span>
      </div>

      <div class="page">
        <aside class="sidebar">
          <div class="brand">
            <div class="brand-logo"><Icon name="beaker" :size="48" /></div>
            <div class="brand-text">
              <h2><span v-fit="138" class="fit">LabGig</span></h2>
              <p><span v-fit="146" class="fit">CRM System.</span></p>
              <p><span v-fit="124" class="fit">AI Powered</span></p>
            </div>
            <Icon class="collapse" name="left" :size="32" />
          </div>
          <nav class="nav">
            <template v-for="n in nav" :key="n.t">
              <a class="nav-item" :class="{ current: n.open }">
                <Icon class="nav-icon" :name="n.icon" :size="40" />
                <span v-fit="n.w" class="fit">{{ n.t }}</span>
                <Icon v-if="n.open || n.group" class="chev" :name="n.open ? 'up' : 'down'" :size="32" />
              </a>
              <a v-for="c in n.children" :key="c.t" class="nav-item sub">
                <Icon class="nav-icon" :name="c.icon" :size="32" />
                <span v-fit="c.w" class="fit">{{ c.t }}</span>
              </a>
            </template>
          </nav>
        </aside>

        <main class="main">
          <div class="topbar">
            <div class="org-logo">
              <svg width="80" height="27" viewBox="0 0 80 27">
                <rect width="80" height="27" fill="#f3f4f6" />
                <text x="6" y="19.500" font-family="Inter, sans-serif" font-size="21" font-weight="900" font-style="italic" textLength="40" lengthAdjust="spacingAndGlyphs" fill="#3f9fa5">LAB</text>
                <text x="43" y="19.500" font-family="Inter, sans-serif" font-size="21" font-weight="900" font-style="italic" textLength="35" lengthAdjust="spacingAndGlyphs" fill="#f1b13c">GIG</text>
                <path d="M5 22.300h69" stroke="#f1b13c" stroke-width="1.600" /><path d="M5 24.600h38" stroke="#f1b13c" stroke-width="1" /><path d="M43 24h31" stroke="#3f9fa5" stroke-width="2" />
              </svg>
            </div>
            <div class="brand-text">
              <h2><span v-fit="151" class="fit">Labgigs</span></h2>
              <p><span v-fit="146" class="fit">CRM System.</span></p>
              <p><span v-fit="124" class="fit">AI Powered</span></p>
            </div>
            <div class="account">
              <Icon class="bell" name="bell" :size="32" />
              <Icon class="person" name="user" :size="40" />
              <div class="who">
                <strong><span v-fit="53" class="fit">Hari</span></strong>
                <small><span v-fit="189" class="fit">Company Admin</span></small>
              </div>
            </div>
          </div>

          <div class="content">
            <section class="heading">
              <div>
                <h1><span v-fit="273" class="fit">Contacts</span></h1>
                <p><span v-fit="592" class="fit">Manage your contacts and relationships</span></p>
              </div>
              <button class="add"><Icon name="plus" :size="32" /><span v-fit="233" class="fit">Add New Contact</span></button>
            </section>

            <section class="stats">
              <article v-for="s in stats" :key="s.label" class="card stat">
                <p><span v-fit="s.w" class="fit">{{ s.label }}</span></p>
                <div class="stat-row" :style="{ color: s.value_color }">
                  <strong>{{ s.value }}</strong>
                  <Icon :name="s.icon" :size="64" :style="{ color: s.icon_color }" />
                </div>
              </article>
            </section>

            <section class="card searchbar">
              <Icon name="search" :size="40" />
              <input v-model="query" type="text" placeholder="Search contacts by name, email, or company..." />
            </section>

            <section class="card list">
              <h3><span v-fit="294" class="fit">Contacts List</span></h3>
              <p class="count"><span v-fit="200" class="fit">1 contact found</span></p>
              <article class="contact">
                <div class="avatar"><Icon name="user" :size="48" /></div>
                <div class="identity">
                  <div class="name-row">
                    <strong><span v-fit="287" class="fit">Ramesh Madisetty</span></strong>
                    <span class="badge"><span v-fit="69" class="fit">Active</span></span>
                  </div>
                  <p class="title"><span v-fit="95" class="fit">No title</span></p>
                  <p class="company"><Icon name="building" :size="24" /><span v-fit="483" class="fit">8870a984-b719-468d-845f-739872123e4e</span></p>
                </div>
                <div v-for="(col, i) in details" :key="i" class="col">
                  <p v-for="d in col" :key="d.k">
                    <span v-fit="d.kw" class="fit key">{{ d.k }}</span><span v-fit="d.vw" class="fit">{{ d.v }}</span>
                  </p>
                </div>
                <div class="col reach">
                  <p><Icon name="mail" :size="24" /><span v-fit="399" class="fit">vemularanjithkumar.cse@gmail.com</span></p>
                  <p><Icon name="phone" :size="24" /><span v-fit="139" class="fit">9742596739</span></p>
                  <p><Icon name="building" :size="24" /><a v-fit="212" class="fit">https://labgigs.com</a></p>
                </div>
                <button class="edit"><Icon name="edit" :size="32" /></button>
              </article>
            </section>
          </div>
        </main>
      </div>
    </div>

    <footer class="dock">
      <div v-for="a in leftApps" :key="a" class="slot">
        <svg width="56" height="56" viewBox="0 0 56 56" overflow="visible" v-html="APPS[a]"></svg>
        <i v-if="running.has(a)" class="dot"></i>
      </div>
      <i class="dock-sep"></i>
      <div v-for="a in rightApps" :key="a" class="slot">
        <svg width="56" height="56" viewBox="0 0 56 56" overflow="visible" v-html="APPS[a]"></svg>
        <i v-if="running.has(a)" class="dot"></i>
      </div>
      <i class="dock-sep"></i>
      <div v-for="(t, i) in thumbs" :key="i" class="slot thumb">
        <svg width="64" height="64" viewBox="0 0 64 64" v-html="t.art"></svg>
        <svg v-if="t.badge" class="thumb-badge" width="20" height="20" viewBox="0 0 56 56" overflow="visible" v-html="APPS[t.badge]"></svg>
      </div>
    </footer>
  </div>
</template>

<style>
html,
body {
  margin: 0;
  background: #000;
}
</style>

<style scoped>
.desktop {
  width: 3024px;
  height: 1964px;
  overflow: hidden;
  display: flex;
  flex-direction: column;
  font-family: Inter, "Liberation Sans", sans-serif;
  background: linear-gradient(90deg, #071412 0, #0c1917 500px, #30190c 700px, #3a1f10 1050px, #172112 1200px, #141d14 2000px, #1c2213 2500px, #3a2416 2800px, #1a120c 3024px);
}
.desktop *,
.desktop *::before,
.desktop *::after {
  box-sizing: border-box;
}
h1, h2, h3, p {
  margin: 0;
}
svg {
  flex: none;
  display: block;
}
.defs {
  position: absolute;
}
.fit {
  display: inline-block;
  white-space: nowrap;
}

/* Menu bar */
.menubar {
  flex: none;
  height: 74px;
  display: flex;
  align-items: center;
  padding: 0 34px 0 40px;
  color: #fff;
  font-size: 26px;
  font-weight: 500;
  background: linear-gradient(90deg, #464838 0, #43443c 600px, #4c4d3f 1500px, #4d4d3b 2200px, #454430 3024px);
}
.apple {
  margin-top: -4px;
}
.menus {
  display: flex;
  margin-left: 40px;
  padding-bottom: 2px;
}
.clock {
  padding-bottom: 2px;
}
.menu.app {
  font-weight: 700;
}
.status {
  margin-left: auto;
  display: flex;
  align-items: center;
  color: #f0f0ea;
}
.status svg:nth-child(2) { margin-left: 39px; }
.status svg:nth-child(3) { margin-left: 39px; }
.status svg:nth-child(4) { margin-left: 38px; }
.status svg:nth-child(5) { margin-left: 39px; }
.status svg:nth-child(6) { margin-left: 39px; }
.siri {
  width: 28px;
  height: 28px;
  margin: 0 33px 0 36px;
  border-radius: 50%;
  border: 1px solid #7a93a0;
  background: radial-gradient(circle at 52% 50%, #fff 0 12%, transparent 35%), conic-gradient(#2f7a62, #2c5f80 90deg, #2450a0 150deg, #5040a0 200deg, #b03860 270deg, #6a4a48 320deg, #2f7a62);
}

/* Browser window */
.window {
  flex: none;
  height: 1782px;
  margin-top: 2px;
  display: flex;
  flex-direction: column;
  border-radius: 22px;
  overflow: hidden;
  background: #241c2c;
  border-top: 2px solid #6f6875;
  box-shadow: 0 0 0 6px #050505;
}
.tabstrip {
  flex: none;
  height: 78px;
  display: flex;
  align-items: center;
  padding: 0 12px 0 42px;
  color: #d6cbe0;
}
.lights {
  display: flex;
  gap: 16px;
  width: 140px;
}
.lights i {
  width: 24px;
  height: 24px;
  border-radius: 50%;
}
.red { background: #ec6a5e; }
.amber { background: #f4bf4f; }
.green { background: #61c554; }
.tabs {
  display: flex;
  height: 78px;
  padding-top: 10px;
}
.tab {
  position: relative;
  width: 96px;
  height: 68px;
  padding: 0 0 12px 22px;
  display: flex;
  align-items: center;
}
.tab.wide { width: 97.750px; }
.tab::after {
  content: "";
  position: absolute;
  right: 0;
  top: 12px;
  width: 3px;
  height: 32px;
  border-radius: 2px;
  background: #403748;
}
.tab.last::after,
.tab.active::after {
  display: none;
}
.letter {
  width: 5px;
  margin-left: 18px;
  overflow: hidden;
  font-size: 24px;
  line-height: 30px;
  color: #d6cbe0;
  opacity: 0.8;
}
.tab.active {
  width: 84px;
  margin-left: 5px;
  padding-left: 16px;
  border-radius: 20px 20px 0 0;
  background: #403748;
}
.tab.active .letter {
  margin-left: 0;
  margin-right: 18px;
}
.tab.active::before {
  content: "";
  position: absolute;
  left: -22px;
  right: -22px;
  bottom: 0;
  height: 22px;
  background:
    radial-gradient(circle at 0 0, transparent 21.500px, #403748 22px) left / 22px 22px no-repeat,
    radial-gradient(circle at 100% 0, transparent 21.500px, #403748 22px) right / 22px 22px no-repeat;
}
.tab.after {
  width: 104px;
  padding-left: 28px;
}
.newtab {
  margin-left: 15px;
}
.tabsearch {
  width: 56px;
  height: 56px;
  margin: 0 0 2px auto;
  padding: 0;
  display: flex;
  align-items: center;
  justify-content: center;
  border: 0;
  border-radius: 20px;
  background: #403748;
  color: #e8e0ee;
}
.toolbar {
  flex: none;
  height: 94px;
  display: flex;
  align-items: center;
  padding-left: 28px;
  border-bottom: 2px solid #4a464c;
  border-radius: 20px 20px 0 0;
  background: #403748;
  color: #d6cbe0;
}
.forward {
  margin-left: 39px;
  color: #7d7485;
}
.reload {
  margin-left: 41px;
}
.omnibox {
  width: 2509px;
  height: 68px;
  margin-left: 36px;
  display: flex;
  align-items: center;
  padding: 0 32px 0 10px;
  border-radius: 34px;
  background: #2b2133;
}
.siteinfo {
  width: 48px;
  height: 48px;
  display: flex;
  align-items: center;
  justify-content: center;
  border-radius: 50%;
  background: #403748;
  color: #e9e2ee;
}
.url {
  margin-left: 16px;
  font-size: 28px;
  color: #c9c2cd;
}
.url b {
  font-weight: 400;
  color: #ece5f0;
}
.bookmark {
  margin-left: auto;
  color: #d0c9d2;
}
.cast {
  margin-left: 33px;
}
.divider {
  width: 3px;
  height: 32px;
  margin-left: 34px;
  border-radius: 2px;
  background: #5b5263;
}
.profile {
  width: 40px;
  height: 40px;
  margin-left: 33px;
  border-radius: 50%;
  background: #6f279c;
  color: #fff;
  font-size: 21px;
  line-height: 38px;
  text-align: center;
}
.dots {
  display: flex;
  flex-direction: column;
  gap: 5px;
  margin-left: 49px;
}
.dots i {
  width: 6px;
  height: 6px;
  border-radius: 50%;
  background: #d6cbe0;
}

/* Application shell */
.page {
  flex: 1;
  display: flex;
  background: #fff;
}
.sidebar {
  width: 512px;
  border-right: 2px solid #e5e7eb;
}
.brand,
.topbar {
  height: 186px;
  display: flex;
  align-items: center;
  border-bottom: 2px solid #e4e6ea;
}
.brand {
  padding: 0 56px 0 32px;
}
.brand-logo,
.org-logo {
  width: 80px;
  height: 80px;
  display: flex;
  align-items: center;
  justify-content: center;
}
.brand-logo {
  border-radius: 24px;
  color: #fff;
  background: linear-gradient(135deg, #3761e3, #2b40a8);
  box-shadow: 0 20px 30px -6px rgba(0, 0, 0, 0.12), 0 8px 12px -6px rgba(0, 0, 0, 0.12);
}
.org-logo {
  border-radius: 16px;
  background: linear-gradient(135deg, #5084ee, #3761e3);
}
.brand-text {
  margin-left: 24px;
}
.brand-text h2 {
  font-size: 40px;
  line-height: 56px;
  font-weight: 700;
  color: #111827;
}
.brand-text p {
  font-size: 23.500px;
  line-height: 32px;
  color: #6b7280;
}
.collapse {
  margin-left: auto;
  color: #0a0a0a;
}
.nav {
  display: flex;
  flex-direction: column;
  gap: 8px;
  padding: 32px 24px;
}
.nav-item {
  height: 80px;
  display: flex;
  align-items: center;
  padding: 0 24px;
  border-radius: 16px;
  font-size: 27.500px;
  font-weight: 500;
  color: #4b5563;
}
.nav-item .fit {
  padding-bottom: 2px;
}
.nav-item .nav-icon {
  margin-right: 24px;
  color: #9ca3af;
}
.nav-item.sub {
  height: 72px;
  padding-left: 72px;
}
.nav-item.current,
.nav-item.current .nav-icon {
  color: #2f50d0;
}
.nav-item.current {
  background: #eff5ff;
  box-shadow: 0 2px 4px rgba(0, 0, 0, 0.04);
}
.chev {
  margin-left: auto;
  color: #9ca3af;
}

/* Top bar */
.main {
  flex: 1;
  min-width: 0;
  display: flex;
  flex-direction: column;
  background: #f9fafc;
}
.topbar {
  position: relative;
  padding: 0 48px;
  background: #fff;
  box-shadow: 0 2px 5px rgba(0, 0, 0, 0.06);
}
.account {
  width: 404px;
  margin-left: auto;
  display: flex;
  align-items: center;
  color: #4b5563;
}
.person {
  margin-left: 75px;
}
.who {
  margin-left: 52px;
  display: flex;
  flex-direction: column;
}
.who strong {
  font-size: 27.500px;
  line-height: 38px;
  padding-bottom: 2px;
  font-weight: 500;
  color: #111827;
}
.who small {
  font-size: 23.500px;
  line-height: 32px;
  color: #6b7280;
}

/* Contacts page */
.content {
  padding: 48px;
  display: flex;
  flex-direction: column;
  gap: 48px;
}
.heading {
  display: flex;
  align-items: center;
  justify-content: space-between;
}
.heading h1 {
  font-size: 60px;
  line-height: 70px;
  font-weight: 700;
  color: #111827;
}
.heading p {
  margin-top: 10px;
  font-size: 31px;
  line-height: 48px;
  color: #4b5563;
}
.add {
  width: 361px;
  height: 80px;
  display: flex;
  align-items: center;
  gap: 32px;
  padding: 0 32px;
  border: 0;
  border-radius: 12px;
  background: #3761e3;
  color: #fff;
  font: 500 27.500px Inter, sans-serif;
}
.stats {
  display: grid;
  grid-template-columns: repeat(4, 1fr);
  gap: 32px;
}
.card {
  border: 2px solid #e5e5e5;
  border-radius: 16px;
  padding: 48px;
  background: #fff;
  box-shadow: 0 2px 5px rgba(0, 0, 0, 0.06);
}
.stat p {
  font-size: 27.500px;
  line-height: 38px;
  font-weight: 500;
  color: #4b5563;
}
.stat-row {
  margin-top: 26px;
  display: flex;
  align-items: center;
  justify-content: space-between;
}
.stat-row strong {
  padding-bottom: 2px;
  font-size: 47px;
  line-height: 62px;
}
.searchbar {
  display: flex;
  align-items: center;
  gap: 16px;
  color: #9ca3af;
}
.searchbar input {
  flex: 1;
  height: 80px;
  padding: 0 24px;
  border: 2px solid #e5e5e5;
  border-radius: 12px;
  background: #fff;
  font: 400 27.500px Inter, sans-serif;
  letter-spacing: -0.250px;
  color: #0a0a0a;
}
.searchbar input::placeholder {
  color: #737373;
}
.list h3 {
  font-size: 48px;
  line-height: 46px;
  font-weight: 600;
  color: #0a0a0a;
}
.count {
  margin-top: 14px;
  font-size: 27.500px;
  line-height: 38px;
  color: #737373;
}
.contact {
  margin-top: 50px;
  height: 196px;
  display: flex;
  align-items: center;
  padding: 32px;
  border: 2px solid #e5e5e5;
  border-radius: 16px;
}
.avatar {
  width: 96px;
  height: 96px;
  display: flex;
  align-items: center;
  justify-content: center;
  border-radius: 16px;
  background: #dee9fb;
  color: #3761e3;
}
.identity {
  width: 562px;
  padding-left: 32px;
}
.name-row {
  display: flex;
  align-items: center;
  gap: 16px;
}
.name-row strong {
  font-size: 31px;
  line-height: 48px;
  font-weight: 600;
  color: #0a0a0a;
}
.badge {
  height: 48px;
  padding: 0 16px;
  border-radius: 24px;
  background: #e0fae7;
  font-size: 23.500px;
  line-height: 48px;
  color: #2b663e;
}
.title {
  font-size: 27.500px;
  line-height: 38px;
  color: #4b5563;
}
.company {
  margin-top: 10px;
  display: flex;
  align-items: center;
  gap: 8px;
  font-size: 23.500px;
  line-height: 32px;
  color: #6b7280;
}
.company svg {
  margin-top: 4px;
}
.col {
  width: 491.500px;
  height: 112px;
  display: flex;
  flex-direction: column;
  gap: 8px;
  padding-left: 32px;
  font-size: 23.500px;
  line-height: 32px;
  color: #111827;
}
.col p {
  display: flex;
  align-items: center;
}
.key {
  margin-right: 16px;
  color: #6b7280;
}
.reach p {
  gap: 8px;
}
.reach svg {
  color: #6b7280;
}
.reach a {
  color: #3761e3;
}
.edit {
  width: 84px;
  height: 72px;
  margin-left: auto;
  padding: 0;
  display: flex;
  align-items: center;
  justify-content: center;
  border: 2px solid #e5e5e5;
  border-radius: 12px;
  background: #fff;
  color: #0a0a0a;
}

/* Dock */
.dock {
  position: relative;
  flex: none;
  width: 2915px;
  height: 90px;
  margin: 6px 0 0 54px;
  padding-left: 4px;
  display: flex;
  border: 2px solid rgba(255, 255, 255, 0.24);
  border-radius: 30px;
  background: linear-gradient(90deg, #17221d 0, #1a1f1b 350px, #2a1d16 600px, #2d1d14 900px, #262415 1200px, #1e261d 1600px, #202a1d 2100px, #332a1c 2500px, #4a3322 2800px, #2e2318 2915px);
  box-shadow: 0 0 84px rgba(0, 0, 0, 0.26);
}
.slot {
  position: relative;
  width: 70.950px;
  padding-top: 12px;
  display: flex;
  flex-direction: column;
  align-items: center;
}
.dot {
  width: 8px;
  height: 8px;
  margin-top: 8px;
  border-radius: 50%;
  background: #a4a69f;
}
.dock-sep {
  width: 2px;
  height: 66px;
  margin: 10px 15px 0 16px;
  background: rgba(255, 255, 255, 0.3);
}
.thumb {
  padding-top: 7px;
}
.thumb-badge {
  position: absolute;
  right: 6px;
  top: 50px;
}
</style>
